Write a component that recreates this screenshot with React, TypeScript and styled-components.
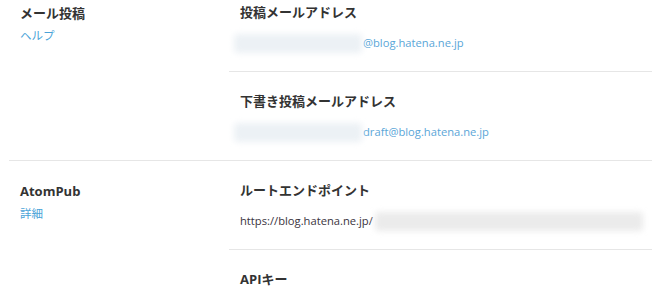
import React from "react";
import styled, { createGlobalStyle } from "styled-components";

const GlobalStyle = createGlobalStyle`
  html, body {
    margin: 0;
    padding: 0;
    background: #ffffff;
    overflow: hidden;
  }
  body {
    font-family: "Open Sans", "Noto Sans CJK JP", sans-serif;
    color: #333333;
  }
`;

const Page = styled.div`
  margin-top: -17px;
`;

const Section = styled.section`
  display: grid;
  grid-template-columns: 220px 1fr;
  margin-left: 9px;
  & + & {
    border-top: 1px solid #e6e6e6;
  }
`;

const Side = styled.div`
  padding: 20px 0 0 11px;
  display: flex;
  flex-direction: column;
  gap: 3px;
`;

const SideTitle = styled.div`
  font-size: 13px;
  font-weight: 700;
  line-height: 20px;
  color: #333333;
`;

const SideLink = styled.a`
  font-size: 11.5px;
  line-height: 20px;
  color: #4aa3d8;
  text-decoration: none;
`;

const Items = styled.div`
  display: flex;
  flex-direction: column;
`;

const Item = styled.div`
  padding: 18px 0 17px 11px;
  & + & {
    border-top: 1px solid #e6e6e6;
  }
`;

const ItemTitle = styled.div`
  font-size: 13px;
  font-weight: 700;
  line-height: 22px;
  color: #333333;
`;

const Value = styled.div<{ $link?: boolean }>`
  margin-top: 9px;
  display: flex;
  align-items: center;
  font-size: 11.2px;
  line-height: 22px;
  color: ${(p) => (p.$link ? "#5aa6d8" : "#3a3340")};
  white-space: nowrap;
`;

const Blur = styled.span<{ $w: number; $tone: "blue" | "gray"; $lead?: number }>`
  display: inline-block;
  width: ${(p) => p.$w}px;
  height: 19px;
  margin-left: ${(p) => p.$lead ?? 0}px;
  margin-right: 1px;
  background: ${(p) => (p.$tone === "blue" ? "#ecf1f5" : "#ebebeb")};
  filter: blur(3px);
  border-radius: 4px;
`;

export default function App() {
  return (
    <>
      <GlobalStyle />
      <Page>
        <Section>
          <Side>
            <SideTitle>メール投稿</SideTitle>
            <SideLink href="#">ヘルプ</SideLink>
          </Side>
          <Items>
            <Item>
              <ItemTitle>投稿メールアドレス</ItemTitle>
              <Value $link>
                <Blur $w={128} $tone="blue" $lead={-6} />
                @blog.hatena.ne.jp
              </Value>
            </Item>
            <Item>
              <ItemTitle>下書き投稿メールアドレス</ItemTitle>
              <Value $link>
                <Blur $w={128} $tone="blue" $lead={-6} />
                draft@blog.hatena.ne.jp
              </Value>
            </Item>
          </Items>
        </Section>
        <Section>
          <Side>
            <SideTitle>AtomPub</SideTitle>
            <SideLink href="#">詳細</SideLink>
          </Side>
          <Items>
            <Item>
              <ItemTitle>ルートエンドポイント</ItemTitle>
              <Value>
                https://blog.hatena.ne.jp/
                <Blur $w={268} $tone="gray" $lead={2} />
              </Value>
            </Item>
            <Item>
              <ItemTitle>APIキー</ItemTitle>
            </Item>
          </Items>
        </Section>
      </Page>
    </>
  );
}
